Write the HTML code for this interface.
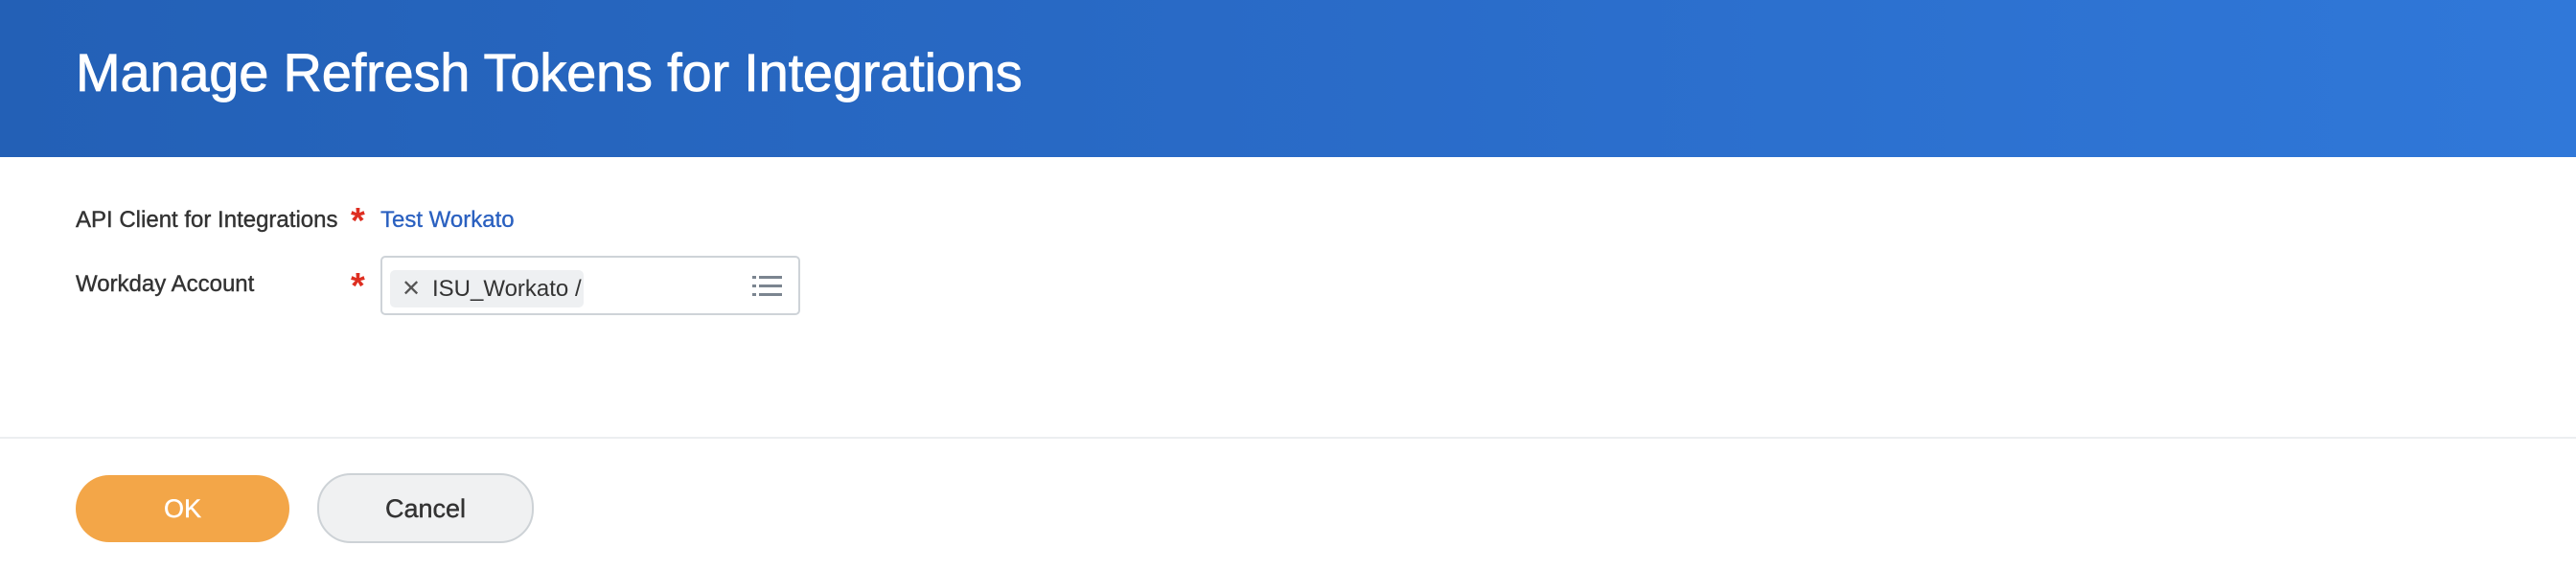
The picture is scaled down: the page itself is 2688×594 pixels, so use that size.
<!DOCTYPE html>
<html><head><meta charset="utf-8"><style>
html,body{margin:0;padding:0;width:2688px;height:594px;overflow:hidden;background:#fff;font-family:"Liberation Sans",sans-serif;}
.hdr{position:absolute;left:0;top:0;width:2688px;height:164px;background:linear-gradient(90deg,#2360b6 0%,#2a6cc9 55%,#3078d9 100%);}
.hdr h1{position:absolute;left:79px;top:43px;margin:0;font-weight:normal;color:#fff;font-size:56px;letter-spacing:-0.2px;-webkit-text-stroke:0.8px #fff;}
.lbl{position:absolute;left:79px;font-size:24px;color:#333;-webkit-text-stroke:0.4px #333;}
.ast{position:absolute;left:366px;font-size:38px;color:#de2e21;font-weight:bold;}
.link{position:absolute;left:397px;top:216px;font-size:24px;color:#2a60c0;-webkit-text-stroke:0.3px #2a60c0;}
.box{position:absolute;left:397px;top:267px;width:438px;height:62px;border:2px solid #ced3d8;border-radius:5px;box-sizing:border-box;}
.chip{position:absolute;left:8px;top:13px;width:202px;height:39px;background:#eef0f2;border-radius:5px;font-size:24px;color:#333;line-height:39px;}
.hr{position:absolute;left:0;top:456px;width:2688px;height:2px;background:#eceef0;}
.btn{position:absolute;top:496px;height:70px;border-radius:35px;box-sizing:border-box;font-size:27px;text-align:center;line-height:70px;}
</style></head><body>
<div class="hdr"><h1>Manage Refresh Tokens for Integrations</h1></div>
<div class="lbl" style="top:216px">API Client for Integrations</div>
<div class="ast" style="top:210px">*</div>
<div class="link">Test Workato</div>
<div class="lbl" style="top:283px">Workday Account</div>
<div class="ast" style="top:278px">*</div>
<div class="box">
 <div class="chip"><span style="position:absolute;left:12px;color:#555">✕</span><span style="position:absolute;left:44px">ISU_Workato /</span></div>
 <svg style="position:absolute;left:386px;top:18px" width="32" height="24" viewBox="0 0 32 24"><g fill="#7b8590"><rect x="0" y="1" width="4" height="3"/><rect x="7" y="1" width="24" height="3"/><rect x="0" y="10" width="4" height="3"/><rect x="7" y="10" width="24" height="3"/><rect x="0" y="19" width="4" height="3"/><rect x="7" y="19" width="24" height="3"/></g></svg>
</div>
<div class="hr"></div>
<div class="btn" style="left:79px;width:223px;background:#f3a648;color:#fff;-webkit-text-stroke:0.4px #fff">OK</div>
<div class="btn" style="left:331px;width:226px;top:494px;height:73px;line-height:71px;background:#f0f1f2;border:2px solid #cdd2d6;color:#333;-webkit-text-stroke:0.4px #333">Cancel</div>
</body></html>
